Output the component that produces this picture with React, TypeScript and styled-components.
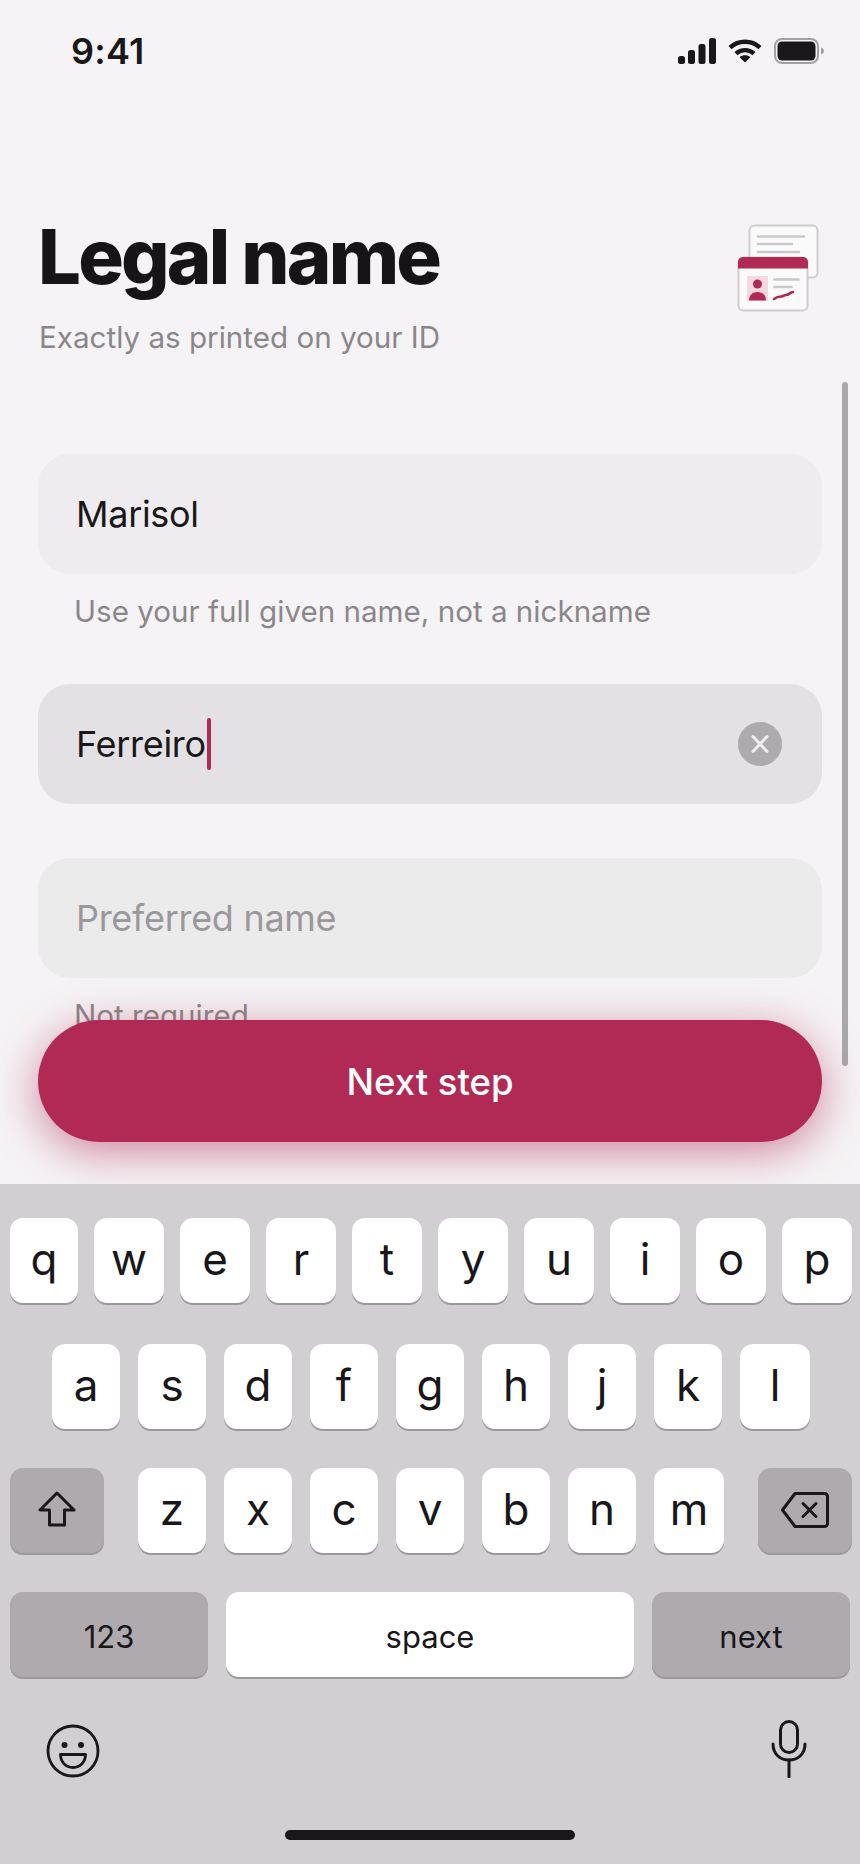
import React from 'react';
import styled, { createGlobalStyle } from 'styled-components';

const crimson = '#b02a55';
const ink = '#1a171a';

const GlobalStyle = createGlobalStyle`
  html, body {
    margin: 0;
    background: #f5f3f5;
  }
  * {
    box-sizing: border-box;
  }
`;

const Screen = styled.div`
  display: flex;
  flex-direction: column;
  width: 860px;
  height: 1864px;
  overflow: hidden;
  background: #f5f3f5;
  color: ${ink};
  font-family: Inter, 'Liberation Sans', sans-serif;
`;

const Main = styled.main`
  position: relative;
  flex: 0 0 1184px;
  overflow: hidden;
`;

const StatusBar = styled.div`
  display: flex;
  align-items: center;
  justify-content: space-between;
  height: 101px;
  padding: 0 35px 0 71px;
`;

const Clock = styled.span`
  font-size: 36px;
  font-weight: 600;
  letter-spacing: 0.2px;
`;

const StatusIcons = styled.div`
  display: flex;
  align-items: center;
  gap: 12px;
`;

const Header = styled.header`
  display: flex;
  align-items: flex-start;
  justify-content: space-between;
  height: 353px;
  padding: 109px 38px 0 38px;
`;

const Title = styled.h1`
  margin: 0;
  font-size: 76px;
  line-height: 92px;
  font-weight: 800;
  letter-spacing: -2.8px;
  color: #171417;
`;

const Subtitle = styled.p`
  margin: 15px 0 0 1px;
  font-size: 29.6px;
  line-height: 40px;
  color: #8a878a;
`;

const Illustration = styled.svg`
  margin: 12px 1px 0 0;
`;

const Form = styled.div`
  display: flex;
  flex-direction: column;
  gap: 54px;
  padding: 0 38px;
`;

const Group = styled.div`
  display: flex;
  flex-direction: column;
  gap: 16px;
  margin-bottom: -2px;
`;

const Field = styled.div<{ $tone: string }>`
  display: flex;
  align-items: center;
  justify-content: space-between;
  height: 120px;
  padding: 0 40px 0 38px;
  border-radius: 32px;
  background: ${(p) => p.$tone};
`;

const Value = styled.span<{ $muted?: boolean }>`
  display: flex;
  align-items: center;
  font-size: 36px;
  letter-spacing: -0.3px;
  color: ${(p) => (p.$muted ? '#9b989b' : ink)};
`;

const Caret = styled.i`
  display: block;
  width: 4px;
  height: 52px;
  margin-left: 1px;
  border-radius: 2px;
  background: ${crimson};
`;

const ClearButton = styled.span`
  display: flex;
  align-items: center;
  justify-content: center;
  width: 44px;
  height: 44px;
  border-radius: 50%;
  background: #aeabae;
`;

const Helper = styled.p`
  margin: 0;
  padding-left: 36px;
  font-size: 29.6px;
  line-height: 42px;
  color: #8a878a;
`;

const NextButton = styled.button`
  position: absolute;
  left: 38px;
  right: 38px;
  bottom: 42px;
  height: 122px;
  padding: 2px 0 0;
  border: 0;
  border-radius: 61px;
  background: ${crimson};
  color: #fff;
  font-family: inherit;
  font-size: 36.5px;
  font-weight: 500;
  box-shadow: 0 10px 44px rgba(176, 42, 85, 0.55);
`;

const ScrollThumb = styled.div`
  position: absolute;
  top: 382px;
  right: 12px;
  width: 6px;
  height: 684px;
  border-radius: 3px;
  background: #a9a8aa;
`;

const Keyboard = styled.section`
  position: relative;
  flex: 1;
  padding: 34px 8px 0 10px;
  background: #d1cfd2;
`;

const KeyRow = styled.div<{ $inset?: number; $endInset?: number; $spread?: boolean; $gap?: number }>`
  display: flex;
  justify-content: ${(p) => (p.$spread ? 'space-between' : 'flex-start')};
  gap: ${(p) => p.$gap ?? 18}px;
  height: 85px;
  margin-bottom: 39px;
  padding-left: ${(p) => p.$inset ?? 0}px;
  padding-right: ${(p) => p.$endInset ?? 0}px;

  &:first-child {
    margin-bottom: 41px;
  }
`;

const Key = styled.div`
  display: flex;
  align-items: center;
  justify-content: center;
  flex: 0 0 68px;
  border-radius: 13px;
  background: #fff;
  box-shadow: 0 2px 0 #9a989b;
  font-size: 44px;
  padding-bottom: 4px;
`;

const TopKey = styled(Key)`
  flex-basis: 70px;

  &:first-child {
    flex-basis: 68px;
  }
`;

const LetterKey = styled(Key)`
  &:last-child {
    flex-basis: 70px;
  }
`;

const ActionKey = styled(Key)`
  flex-basis: 94px;
  padding-bottom: 2px;
  background: #aeaaad;
`;

const LetterGroup = styled.div`
  display: flex;
  gap: 18px;
`;

const WideKey = styled(Key)<{ $width: number; $gray?: boolean }>`
  flex: 0 0 ${(p) => p.$width}px;
  padding: 3px 0 0;
  background: ${(p) => (p.$gray ? '#aeaaad' : '#fff')};
  font-size: 31px;
`;

const BottomBar = styled.div`
  display: flex;
  align-items: center;
  justify-content: space-between;
  padding: 4px 45px 0 36px;
`;

const EmojiSlot = styled.span`
  display: flex;
  padding-top: 3px;
`;

const HomeBar = styled.div`
  position: absolute;
  left: 285px;
  bottom: 24px;
  width: 290px;
  height: 10px;
  border-radius: 5px;
  background: ${ink};
`;

const SignalIcon = () => (
  <svg width="38" height="26" viewBox="0 0 38 26" fill={ink}>
    <rect x="0" y="18" width="7" height="8" rx="2.5" />
    <rect x="10" y="12" width="7" height="14" rx="2.5" />
    <rect x="20.5" y="6" width="7" height="20" rx="2.5" />
    <rect x="31" y="0" width="7" height="26" rx="2.5" />
  </svg>
);

const WifiIcon = () => (
  <svg width="34" height="24" viewBox="0 0 34 24" fill="none" stroke={ink} strokeWidth="4.4">
    <path d="M2 8.6C10.4 .8 23.6 .8 32 8.6" />
    <path d="M8 14.6C13 10 21 10 26 14.6" />
    <path d="M17 23.5 11.6 18.2C14.6 15.6 19.4 15.6 22.4 18.2Z" fill={ink} stroke="none" />
  </svg>
);

const BatteryIcon = () => (
  <svg width="51" height="26" viewBox="0 0 51 26">
    <rect x="1" y="1" width="43" height="24" rx="7" fill="none" stroke="#a3a1a4" strokeWidth="2" />
    <rect x="3.5" y="3.5" width="38" height="19" rx="4.5" fill={ink} />
    <path d="M47 9.5c2 .6 3 2 3 3.5s-1 2.9-3 3.5z" fill="#a3a1a4" />
  </svg>
);

const IdIllustration = () => (
  <Illustration width="85" height="92" viewBox="0 0 85 92">
    <rect x="13.5" y="3.5" width="68" height="52" rx="5" fill="#fbfafb" stroke="#cfcdd0" strokeWidth="2" />
    <path d="M22 14.5h46M22 22h34M22 30h41" stroke="#c9c7ca" strokeWidth="2.6" strokeLinecap="round" />
    <rect x="2.5" y="35.5" width="69" height="53" rx="5" fill="#fbfafb" stroke="#cfcdd0" strokeWidth="2" />
    <path d="M2 46.5V40a5 5 0 0 1 5-5h60a5 5 0 0 1 5 5v6.5z" fill={crimson} />
    <rect x="11" y="54" width="21" height="25" fill="#f5d9e2" />
    <circle cx="21.5" cy="62" r="4.5" fill={crimson} />
    <path d="M13 78.5c0-5.5 3.5-8.5 8.5-8.5s8.5 3 8.5 8.5z" fill={crimson} />
    <path d="M38.5 57.5h24M38.5 65h17" stroke="#c9c7ca" strokeWidth="2.6" strokeLinecap="round" />
    <path d="M38 77c2.5-2 5-2.5 7-2.5s3-1.5 5-1.5 2.5-.5 3.5-1.5 2-1 3.5-1.5" fill="none" stroke={crimson} strokeWidth="2.6" strokeLinecap="round" />
  </Illustration>
);

const ClearIcon = () => (
  <svg width="22" height="22" viewBox="0 0 22 22" stroke="#f0eef0" strokeWidth="3" strokeLinecap="round">
    <path d="M4 3.5l14 15M18 3.5 4 18.5" />
  </svg>
);

const ShiftIcon = () => (
  <svg width="38" height="38" viewBox="0 0 38 38" fill="none" stroke={ink} strokeWidth="3" strokeLinejoin="round">
    <path d="M19 2 2 19h9.5v15h15V19H36z" />
  </svg>
);

const BackspaceIcon = () => (
  <svg width="48" height="36" viewBox="0 0 48 36" fill="none" stroke={ink} strokeWidth="3" strokeLinejoin="round" strokeLinecap="round">
    <path d="M14 1.5h29.5a3 3 0 0 1 3 3v27a3 3 0 0 1-3 3H14L1.5 18z" />
    <path d="M22 11.5l13 13M35 11.5l-13 13" />
  </svg>
);

const EmojiIcon = () => (
  <svg width="54" height="54" viewBox="0 0 54 54" fill="none" stroke={ink} strokeWidth="2.8">
    <circle cx="27" cy="27" r="25" />
    <circle cx="18.5" cy="21" r="3" fill={ink} stroke="none" />
    <circle cx="35" cy="21" r="3" fill={ink} stroke="none" />
    <path d="M14.5 30.5h25c0 7-5 13-12.5 13s-12.5-6-12.5-13z" strokeLinejoin="round" />
  </svg>
);

const MicIcon = () => (
  <svg width="36" height="58" viewBox="0 0 36 58" fill="none" stroke={ink} strokeWidth="3" strokeLinecap="round">
    <rect x="9.5" y="1.5" width="17" height="31" rx="8.5" />
    <path d="M2 24c0 10 7 16 16 16s16-6 16-16" />
    <path d="M18 40v17" />
  </svg>
);

const rowOne = 'qwertyuiop'.split('');
const rowTwo = 'asdfghjkl'.split('');
const rowThree = 'zxcvbnm'.split('');

const App: React.FC = () => {
  return (
    <>
      <GlobalStyle />
      <Screen>
        <Main>
          <StatusBar>
            <Clock>9:41</Clock>
            <StatusIcons>
              <SignalIcon />
              <WifiIcon />
              <BatteryIcon />
            </StatusIcons>
          </StatusBar>
          <Header>
            <div>
              <Title>Legal name</Title>
              <Subtitle>Exactly as printed on your ID</Subtitle>
            </div>
            <IdIllustration />
          </Header>
          <Form>
            <Group>
              <Field $tone="#eeecee">
                <Value>Marisol</Value>
              </Field>
              <Helper>Use your full given name, not a nickname</Helper>
            </Group>
            <Field $tone="#e3e1e4">
              <Value>
                Ferreiro
                <Caret />
              </Value>
              <ClearButton>
                <ClearIcon />
              </ClearButton>
            </Field>
            <Group>
              <Field $tone="#ecebec">
                <Value $muted>Preferred name</Value>
              </Field>
              <Helper>Not required</Helper>
            </Group>
          </Form>
          <ScrollThumb />
          <NextButton>Next step</NextButton>
        </Main>
        <Keyboard>
          <KeyRow $gap={16}>
            {rowOne.map((k) => (
              <TopKey key={k}>{k}</TopKey>
            ))}
          </KeyRow>
          <KeyRow $inset={42}>
            {rowTwo.map((k) => (
              <LetterKey key={k}>{k}</LetterKey>
            ))}
          </KeyRow>
          <KeyRow $spread>
            <ActionKey>
              <ShiftIcon />
            </ActionKey>
            <LetterGroup>
              {rowThree.map((k) => (
                <LetterKey key={k}>{k}</LetterKey>
              ))}
            </LetterGroup>
            <ActionKey>
              <BackspaceIcon />
            </ActionKey>
          </KeyRow>
          <KeyRow $spread $endInset={2}>
            <WideKey $width={198} $gray>
              123
            </WideKey>
            <WideKey $width={408}>space</WideKey>
            <WideKey $width={198} $gray>
              next
            </WideKey>
          </KeyRow>
          <BottomBar>
            <EmojiSlot>
              <EmojiIcon />
            </EmojiSlot>
            <MicIcon />
          </BottomBar>
          <HomeBar />
        </Keyboard>
      </Screen>
    </>
  );
};

export default App;
